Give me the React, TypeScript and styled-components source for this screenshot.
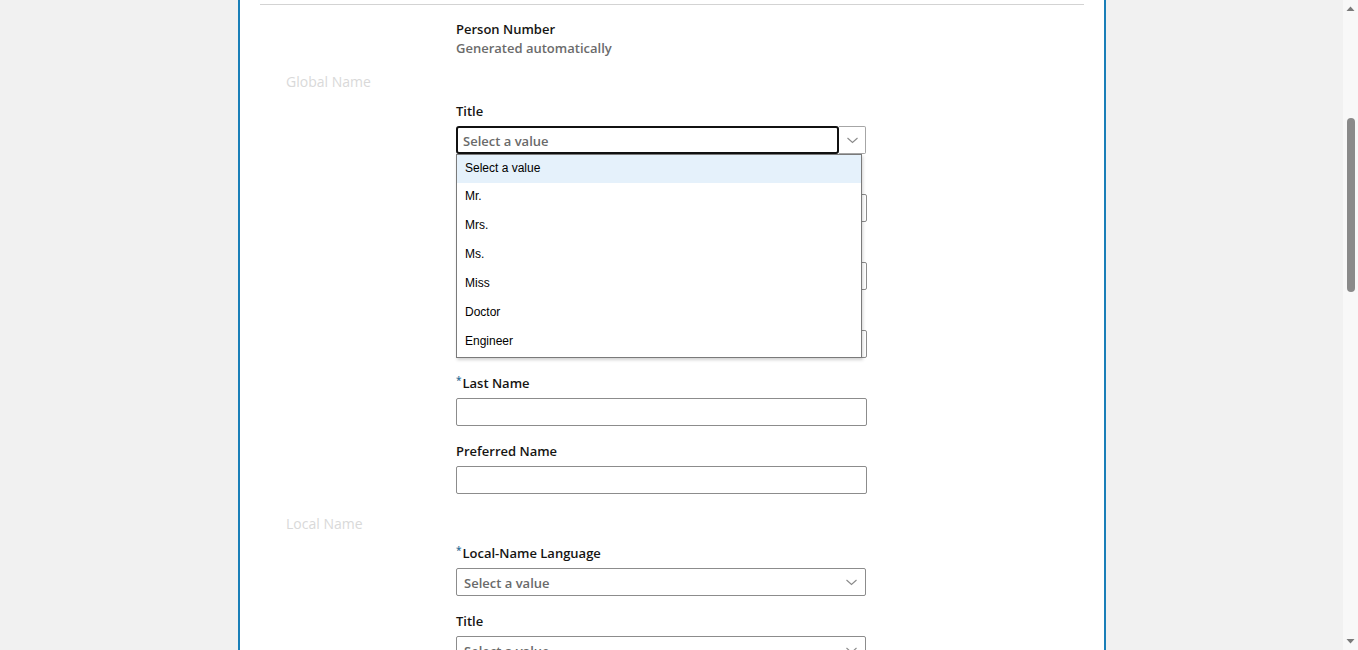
import React from "react";
import styled, { createGlobalStyle } from "styled-components";

const GlobalStyle = createGlobalStyle`
  html, body { margin: 0; padding: 0; height: 100%; overflow: hidden; }
  body { background: #f1f1f1; font-family: "Open Sans", "Noto Sans", sans-serif; }
  #root { height: 100%; }
`;

const Page = styled.div`
  display: flex;
  height: 100vh;
  width: 100vw;
  background: #f1f1f1;
`;

const Main = styled.div`
  flex: 1;
  display: flex;
  justify-content: flex-start;
  padding-left: 238px;
  overflow: hidden;
`;

const Panel = styled.div`
  width: 824px;
  flex-shrink: 0;
  background: #ffffff;
  border-left: 2px solid #1a7fb8;
  border-right: 2px solid #1a7fb8;
  padding: 4px 20px 0;
  box-sizing: content-box;
`;

const Divider = styled.div`
  height: 1px;
  background: #d3d3d3;
`;

const FieldColumn = styled.div`
  margin-left: 196px;
  width: 411px;
  display: flex;
  flex-direction: column;
  gap: 16px;
`;

const PersonBlock = styled.div`
  margin-left: 196px;
  margin-top: 15px;
  display: flex;
  flex-direction: column;
`;

const Label = styled.div`
  font-family: "Open Sans", "Noto Sans", sans-serif;
  font-weight: 600;
  font-size: 13px;
  line-height: 19px;
  color: #161513;
  white-space: nowrap;
`;

const ReadOnlyValue = styled.div`
  font-family: "Open Sans", "Noto Sans", sans-serif;
  font-weight: 600;
  font-size: 13px;
  line-height: 19px;
  color: #6b6b6b;
`;

const SectionTitle = styled.div<{ $top: number }>`
  margin-top: ${(p) => p.$top}px;
  margin-bottom: 11px;
  padding-left: 26px;
  font-family: "Open Sans", "Noto Sans", sans-serif;
  font-size: 14px;
  line-height: 19px;
  color: #d9d9d9;
`;

const Field = styled.div`
  position: relative;
  display: flex;
  flex-direction: column;
  gap: 5px;
`;

const Required = styled.span`
  color: #2f6e97;
  font-size: 10px;
  vertical-align: top;
  line-height: 12px;
  margin-right: 1px;
`;

const TextInput = styled.div`
  height: 28px;
  box-sizing: border-box;
  border: 1px solid #8c8c8c;
  border-radius: 2px;
  background: #fff;
`;

const SelectBox = styled.div`
  height: 28px;
  width: 410px;
  box-sizing: border-box;
  border: 1px solid #8c8c8c;
  border-radius: 2px;
  display: flex;
  align-items: center;
  justify-content: space-between;
  padding: 1px 8px 0 7px;
  background: #fff;
`;

const Placeholder = styled.span`
  font-family: "Open Sans", "Noto Sans", sans-serif;
  font-weight: 600;
  font-size: 13px;
  color: #6a6a6a;
`;

const FocusSelect = styled.div`
  height: 28px;
  width: 410px;
  display: flex;
`;

const FocusText = styled.div`
  flex: 1;
  box-sizing: border-box;
  border: 2px solid #111;
  border-radius: 3px;
  display: flex;
  align-items: center;
  padding: 1px 0 0 5px;
  background: #fff;
`;

const ArrowButton = styled.div`
  width: 27px;
  box-sizing: border-box;
  border: 1px solid #a6a6a6;
  border-left: none;
  border-radius: 0 2px 2px 0;
  display: flex;
  align-items: center;
  justify-content: center;
  padding-left: 1px;
`;

const OptionList = styled.ul`
  position: absolute;
  top: 100%;
  left: 0;
  width: 406px;
  margin: 0;
  padding: 0;
  list-style: none;
  box-sizing: border-box;
  border: 1px solid #7a7a7a;
  background: #fff;
  box-shadow: 1px 2px 3px rgba(0, 0, 0, 0.18);
  z-index: 10;
`;

const Option = styled.li<{ $active?: boolean }>`
  height: 29px;
  box-sizing: border-box;
  padding: 0 7px 2px 8px;
  line-height: 27px;
  font-family: "Liberation Sans", Arial, sans-serif;
  font-size: 12px;
  color: #000;
  background: ${(p) => (p.$active ? "#e5f1fb" : "#fff")};
  &:first-child {
    height: 28px;
    padding-bottom: 1px;
  }
`;

const ScrollBar = styled.div`
  width: 15px;
  flex-shrink: 0;
  background: #f8f8f8;
  display: flex;
  flex-direction: column;
  align-items: center;
`;

const ScrollArrow = styled.div`
  height: 17px;
  width: 15px;
  display: flex;
  align-items: center;
  justify-content: center;
`;

const ScrollTrack = styled.div`
  flex: 1;
  width: 100%;
  display: flex;
  justify-content: center;
`;

const Thumb = styled.div`
  margin-top: 101px;
  width: 8px;
  height: 174px;
  border-radius: 4px;
  background: #8a8a8a;
`;

const Chevron = ({ color = "#8a8a8a" }: { color?: string }) => (
  <svg width="11" height="7" viewBox="0 0 11 7">
    <path d="M0.5 1 L5.5 5.5 L10.5 1" fill="none" stroke={color} strokeWidth="1.1" />
  </svg>
);

const Triangle = ({ up }: { up?: boolean }) => (
  <svg width="9" height="5" viewBox="0 0 9 5">
    <path d={up ? "M0.5 5 L4.5 0.5 L8.5 5 Z" : "M0.5 0 L4.5 4.5 L8.5 0 Z"} fill="#7a7a7a" />
  </svg>
);

const options = ["Select a value", "Mr.", "Mrs.", "Ms.", "Miss", "Doctor", "Engineer"];

export default function App() {
  return (
    <>
      <GlobalStyle />
      <Page>
        <Main>
          <Panel>
            <Divider />
            <PersonBlock>
              <Label>Person Number</Label>
              <ReadOnlyValue>Generated automatically</ReadOnlyValue>
            </PersonBlock>

            <SectionTitle $top={14}>Global Name</SectionTitle>
            <FieldColumn>
              <Field>
                <Label>Title</Label>
                <FocusSelect>
                  <FocusText>
                    <Placeholder>Select a value</Placeholder>
                  </FocusText>
                  <ArrowButton>
                    <Chevron />
                  </ArrowButton>
                </FocusSelect>
                <OptionList>
                  {options.map((o, i) => (
                    <Option key={o} $active={i === 0}>
                      {o}
                    </Option>
                  ))}
                </OptionList>
              </Field>
              <Field>
                <Label>First Name</Label>
                <TextInput />
              </Field>
              <Field>
                <Label>Middle Names</Label>
                <TextInput />
              </Field>
              <Field>
                <Label>Suffix</Label>
                <TextInput />
              </Field>
              <Field>
                <Label>
                  <Required>*</Required>Last Name
                </Label>
                <TextInput />
              </Field>
              <Field>
                <Label>Preferred Name</Label>
                <TextInput />
              </Field>
            </FieldColumn>

            <SectionTitle $top={20}>Local Name</SectionTitle>
            <FieldColumn>
              <Field>
                <Label>
                  <Required>*</Required>Local-Name Language
                </Label>
                <SelectBox>
                  <Placeholder>Select a value</Placeholder>
                  <Chevron />
                </SelectBox>
              </Field>
              <Field>
                <Label>Title</Label>
                <SelectBox>
                  <Placeholder>Select a value</Placeholder>
                  <Chevron />
                </SelectBox>
              </Field>
            </FieldColumn>
          </Panel>
        </Main>
        <ScrollBar>
          <ScrollArrow>
            <Triangle up />
          </ScrollArrow>
          <ScrollTrack>
            <Thumb />
          </ScrollTrack>
          <ScrollArrow>
            <Triangle />
          </ScrollArrow>
        </ScrollBar>
      </Page>
    </>
  );
}
